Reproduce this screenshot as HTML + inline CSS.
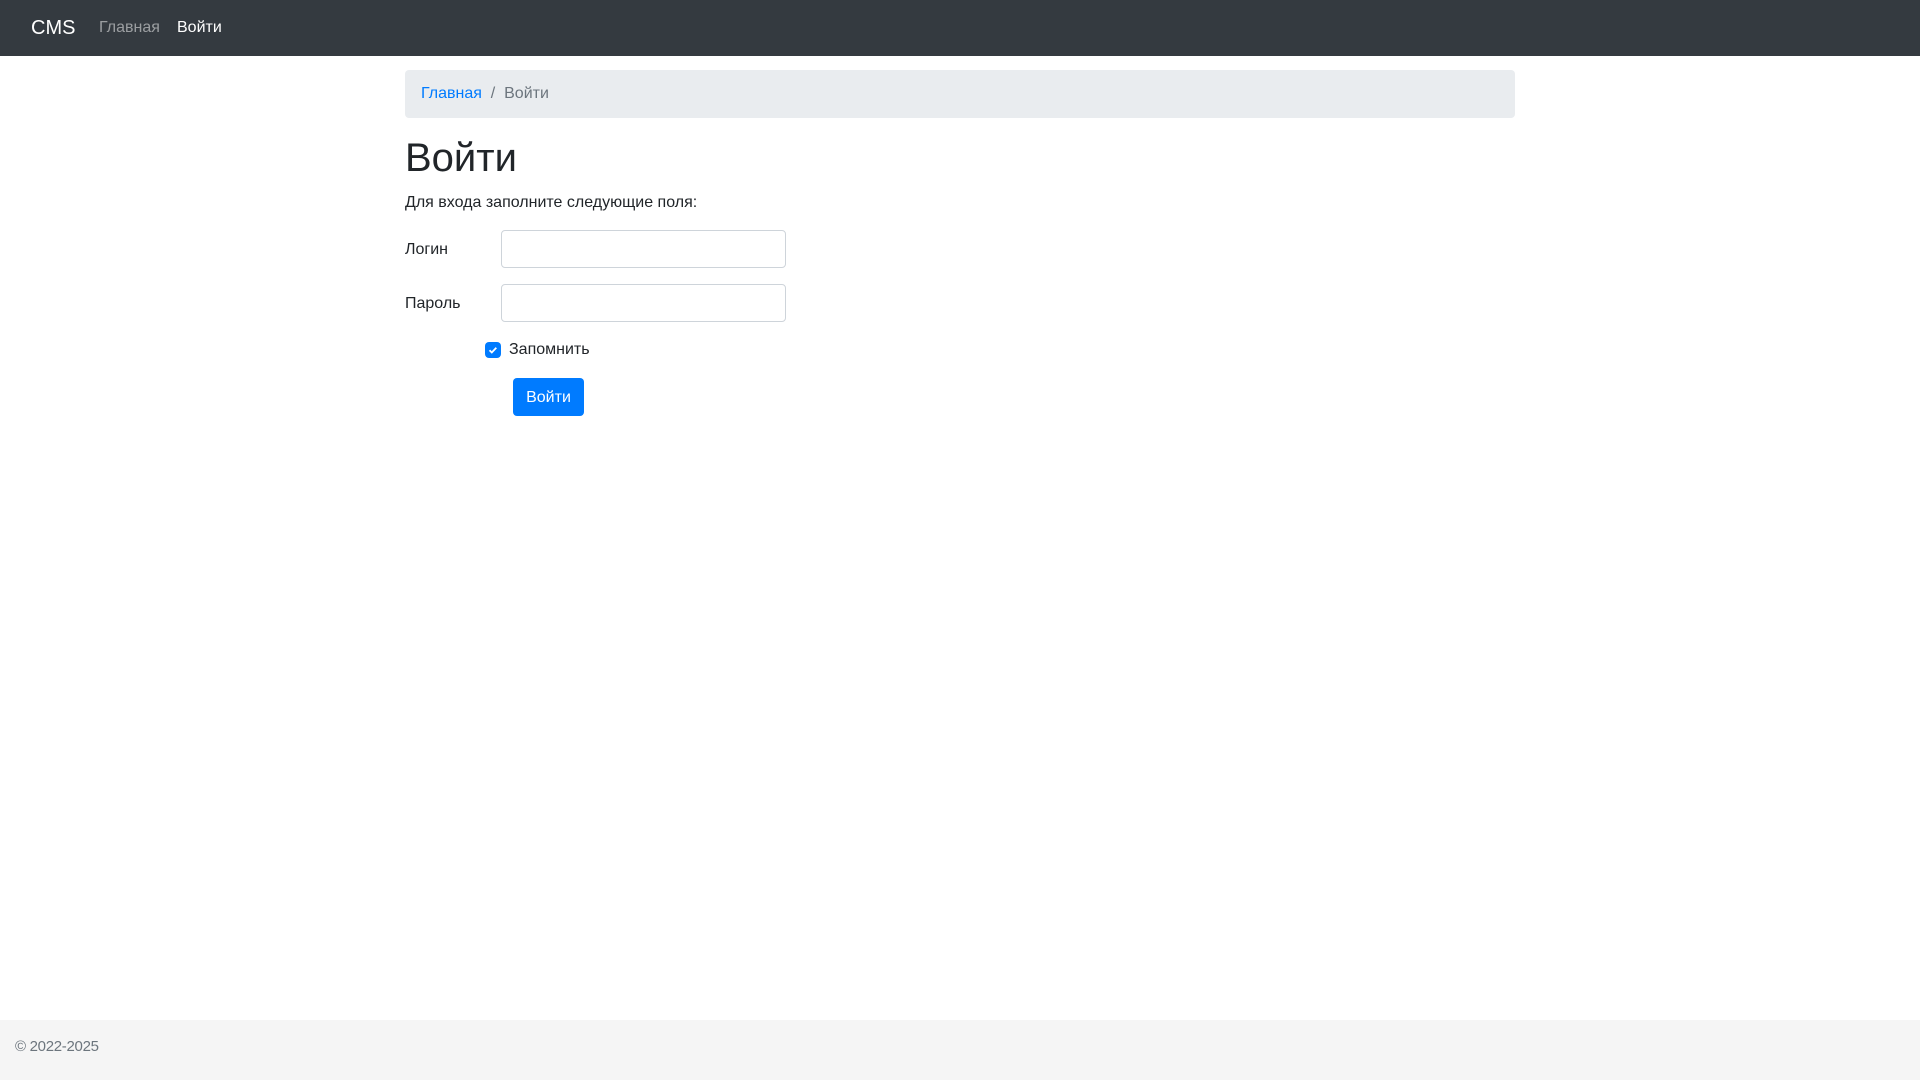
<!DOCTYPE html>
<html><head><meta charset="utf-8"><style>
*{box-sizing:border-box;margin:0;padding:0}
body{width:1920px;height:1080px;position:relative;font-family:"Liberation Sans",Arial,sans-serif;font-size:16px;color:#212529;background:#fff;overflow:hidden}
.nav{position:absolute;left:0;top:0;width:1920px;height:56px;background:#343a40}
.brand{position:absolute;left:31px;top:17px;font-size:20px;color:#fff}
.nl{position:absolute;top:19px;font-size:16px}
.bc{position:absolute;left:405px;top:70px;width:1110px;height:48px;background:#e9ecef;border-radius:4px;padding:15px 16px 0;color:#6c757d}
.bc a{color:#007bff;text-decoration:none}
h1{position:absolute;left:405px;top:134px;font-size:40px;font-weight:500;line-height:1.2}
.p{position:absolute;left:405px;top:194px}
.lbl{position:absolute;left:405px}
.inp{position:absolute;left:501px;width:285px;height:38px;border:1px solid #ced4da;border-radius:4px;background:#fff}
.cb{position:absolute;left:485px;top:342px;width:16px;height:16px;border-radius:4px;background:#007bff}
.btn{position:absolute;left:513px;top:378px;width:71px;height:38px;background:#007bff;color:#fff;border-radius:4px;text-align:center;line-height:39px}
.foot{position:absolute;left:0;top:1020px;width:1920px;height:60px;background:#f5f5f5;color:#6c757d;font-size:15px;padding:18px 15px;letter-spacing:-0.3px}
</style></head><body>
<div class="nav"><span class="brand">CMS</span><span class="nl" style="left:99px;color:rgba(255,255,255,.5)">Главная</span><span class="nl" style="left:177px;color:#fff">Войти</span></div>
<div class="bc"><a>Главная</a>&nbsp;&nbsp;/&nbsp;&nbsp;Войти</div>
<h1>Войти</h1>
<div class="p">Для входа заполните следующие поля:</div>
<div class="lbl" style="top:241px">Логин</div><div class="inp" style="top:230px"></div>
<div class="lbl" style="top:295px">Пароль</div><div class="inp" style="top:284px"></div>
<div class="cb"><svg width="16" height="16" viewBox="0 0 16 16"><path d="M4.5 8.2l2.3 2.3 4.5-4.7" stroke="#fff" stroke-width="1.8" fill="none"/></svg></div>
<div style="position:absolute;left:509px;top:341px">Запомнить</div>
<div class="btn">Войти</div>
<div class="foot">© 2022-2025</div>
</body></html>
